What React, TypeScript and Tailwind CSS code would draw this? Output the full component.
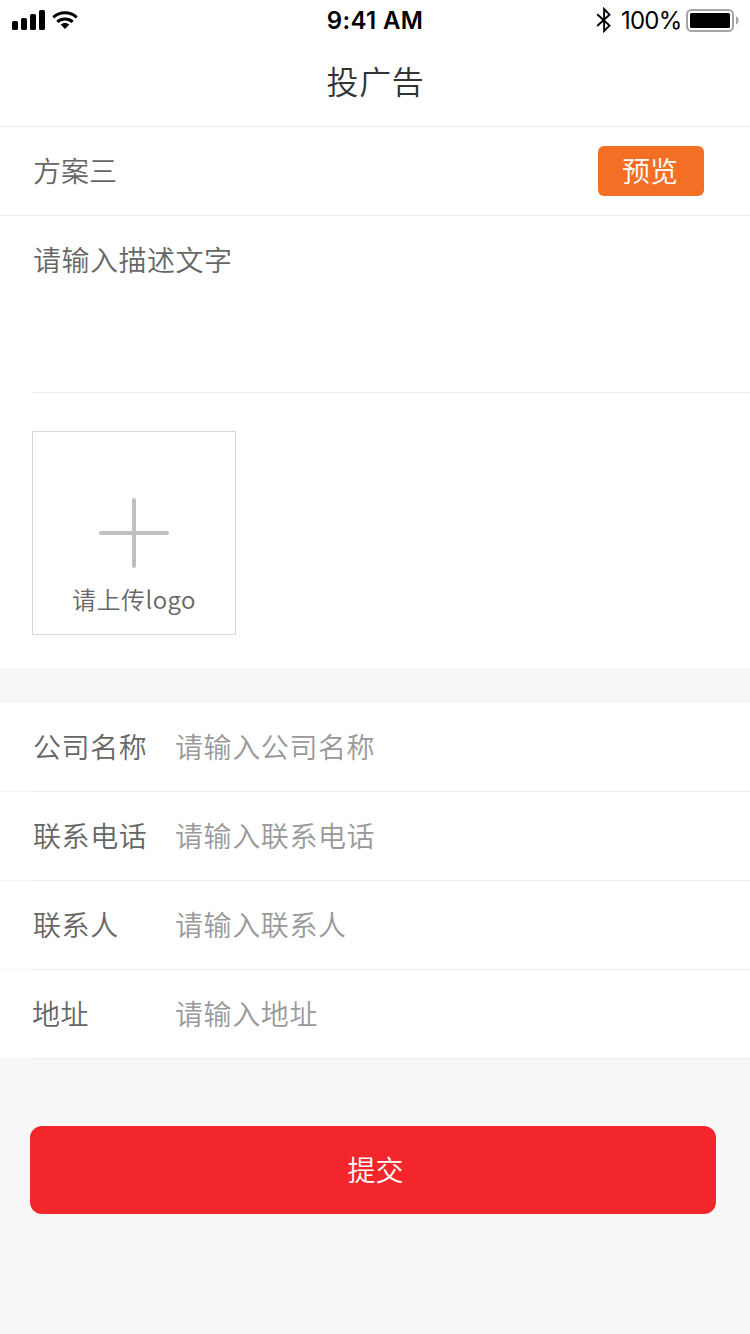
import React from "react";

const fields = [
  { label: "公司名称", placeholder: "请输入公司名称", indent: "pl-[1px]" },
  { label: "联系电话", placeholder: "请输入联系电话", indent: "pl-[1px]" },
  { label: "联系人", placeholder: "请输入联系人", indent: "pl-[1px]" },
  { label: "地址", placeholder: "请输入地址", indent: "pl-0" },
];

function StatusBar() {
  return (
    <div className="grid h-10 grid-cols-3 items-center pl-3 pr-[10px] font-['Inter','Liberation_Sans',sans-serif] font-normal text-black">
      <div className="flex items-center gap-[7px]">
        <svg width="33" height="20" viewBox="0 0 33 20" aria-hidden="true">
          <rect x="0" y="11" width="6" height="9" rx="1.6" />
          <rect x="9" y="8" width="6" height="12" rx="1.6" />
          <rect x="18" y="4" width="6" height="16" rx="1.6" />
          <rect x="27" y="0" width="6" height="20" rx="1.6" />
        </svg>
        <svg width="26" height="18" viewBox="0 0 26 18" aria-hidden="true">
          <g fill="none" stroke="#000" strokeWidth="3">
            <path d="M1.3 6.4C8 .3 18 .3 24.7 6.4" />
            <path d="M5.3 10.8C9.6 6.9 16.4 6.9 20.7 10.8" />
          </g>
          <path d="M8.6 13.6C11.2 11.4 14.8 11.4 17.4 13.6L13 18Z" />
        </svg>
      </div>
      <div className="pr-[2px] pt-[2px] text-center text-[24px] font-semibold leading-[38px] tracking-[0.35px]">9:41 AM</div>
      <div className="flex items-center justify-end">
        <svg width="16" height="26" viewBox="0 0 16 26" fill="none" stroke="#000" strokeWidth="1.9" aria-hidden="true">
          <path d="M1.2 7.2L13.5 18.6L8.1 24V2L13.5 7.6L1.2 19" />
        </svg>
        <span className="ml-[9px] w-[61px] whitespace-nowrap pt-[2px] text-[24px] leading-[38px] tracking-[-0.8px]">100%</span>
        <svg className="ml-1" width="54" height="24" viewBox="0 0 54 24" aria-hidden="true">
          <rect x="1" y="2" width="46" height="21" rx="4.5" fill="none" stroke="#a6a6a6" strokeWidth="2" />
          <rect x="4" y="5" width="40" height="15" rx="1.5" />
          <path d="M50 8.5C53.5 9.5 53.5 15.5 50 16.5Z" fill="#a6a6a6" />
        </svg>
      </div>
    </div>
  );
}

export default function App() {
  return (
    <div className="flex h-[1334px] w-[750px] flex-col bg-[#f7f7f7] font-['Noto_Sans_CJK_SC',sans-serif] text-[28px] font-[350] text-[#666]">
      <header className="h-[127px] border-b border-[#ededed] bg-white">
        <StatusBar />
        <h1 className="pl-px text-center text-[32px] font-[350] leading-[80px] tracking-[0.6px] text-[#333]">投广告</h1>
      </header>

      <section className="flex h-[89px] items-center justify-between border-b border-[#ededed] bg-white pl-[33px] pr-[46px]">
        <h2 className="pb-[2px] font-[350]">方案三</h2>
        <button className="flex h-[50px] w-[106px] items-center justify-center rounded-[6px] bg-[#f36f26] pb-[2px] pr-0.5 text-white">
          预览
        </button>
      </section>

      <section className="h-[452px] bg-white pl-8">
        <div className="h-[177px] border-b border-[#ededed] pl-px pt-[22px] leading-[42px] tracking-[0.5px]">请输入描述文字</div>
        <button className="mt-[38px] flex h-[204px] w-[204px] flex-col items-center border border-[#d8d8d8] pt-[66px]">
          <svg width="70" height="70" viewBox="0 0 70 70" stroke="#c0c0c0" strokeWidth="4" strokeLinecap="round" aria-hidden="true">
            <path d="M2 35H68M35 2V68" />
          </svg>
          <span className="mt-[13px] text-[24px] leading-9 tracking-[0.5px]">请上传logo</span>
        </button>
      </section>

      <section className="mt-[35px]">
        {fields.map((field) => (
          <div key={field.label} className="bg-[#f7f7f7]">
            <div className="h-[88px] bg-white pl-8">
              <div className="flex h-[89px] items-center border-b border-[#ededed] pb-[2px] tracking-[0.6px]">
                <span className={"w-[143px] " + field.indent}>{field.label}</span>
                <span className="text-[#999]">{field.placeholder}</span>
              </div>
            </div>
            <div className="h-px" />
          </div>
        ))}
      </section>

      <button className="ml-[30px] mt-[67px] flex h-[88px] w-[686px] items-center justify-center rounded-xl bg-[#f3262c] pb-[2px] pl-[5px] text-white">
        提交
      </button>
    </div>
  );
}
